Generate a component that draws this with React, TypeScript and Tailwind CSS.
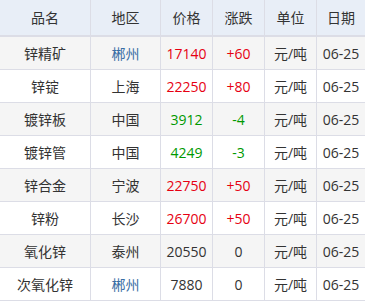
import React from 'react';

type Row = {
  name: string;
  region: string;
  price: string;
  change: string;
  trend: 'up' | 'down' | 'flat';
  link?: boolean;
};

const ROWS: Row[] = [
  { name: '锌精矿', region: '郴州', price: '17140', change: '+60', trend: 'up', link: true },
  { name: '锌锭', region: '上海', price: '22250', change: '+80', trend: 'up' },
  { name: '镀锌板', region: '中国', price: '3912', change: '-4', trend: 'down' },
  { name: '镀锌管', region: '中国', price: '4249', change: '-3', trend: 'down' },
  { name: '锌合金', region: '宁波', price: '22750', change: '+50', trend: 'up' },
  { name: '锌粉', region: '长沙', price: '26700', change: '+50', trend: 'up' },
  { name: '氧化锌', region: '泰州', price: '20550', change: '0', trend: 'flat' },
  { name: '次氧化锌', region: '郴州', price: '7880', change: '0', trend: 'flat', link: true },
];

const trendColor = {
  up: 'text-[#e60012]',
  down: 'text-[#009900]',
  flat: 'text-[#333333]',
};

const cols = ['w-[91px]', 'w-[70px]', 'w-[52px]', 'w-[52px]', 'w-[52px]', 'flex-1'];

const Cell: React.FC<{ i: number; className?: string; children: React.ReactNode }> = ({ i, className = '', children }) => (
  <div
    className={`${cols[i]} flex items-center justify-center ${i < 5 ? 'border-r border-[#dcdde6]' : ''} ${className}`}
  >
    {children}
  </div>
);

export default function App() {
  return (
    <div
      className="w-[365px] h-[301px] overflow-hidden bg-white text-[14px] text-[#333333]"
      style={{ fontFamily: '"Open Sans", "Noto Sans CJK SC", sans-serif' }}
    >
      <div className="flex h-[37px] bg-[#e8eef7] border-b-2 border-[#dcdde6]">
        {['品名', '地区', '价格', '涨跌', '单位', '日期'].map((h, i) => (
          <Cell key={h} i={i}>{h}</Cell>
        ))}
      </div>
      {ROWS.map((r, idx) => (
        <div
          key={r.name}
          className={`flex h-[33px] border-b border-[#dcdde6] ${idx % 2 === 0 ? 'bg-[#f5f5f5]' : 'bg-white'}`}
        >
          <Cell i={0}>{r.name}</Cell>
          <Cell i={1} className={r.link ? 'text-[#3a6ea5]' : ''}>{r.region}</Cell>
          <Cell i={2} className={trendColor[r.trend]}>{r.price}</Cell>
          <Cell i={3} className={trendColor[r.trend]}>{r.change}</Cell>
          <Cell i={4}>元/吨</Cell>
          <Cell i={5}>06-25</Cell>
        </div>
      ))}
    </div>
  );
}
